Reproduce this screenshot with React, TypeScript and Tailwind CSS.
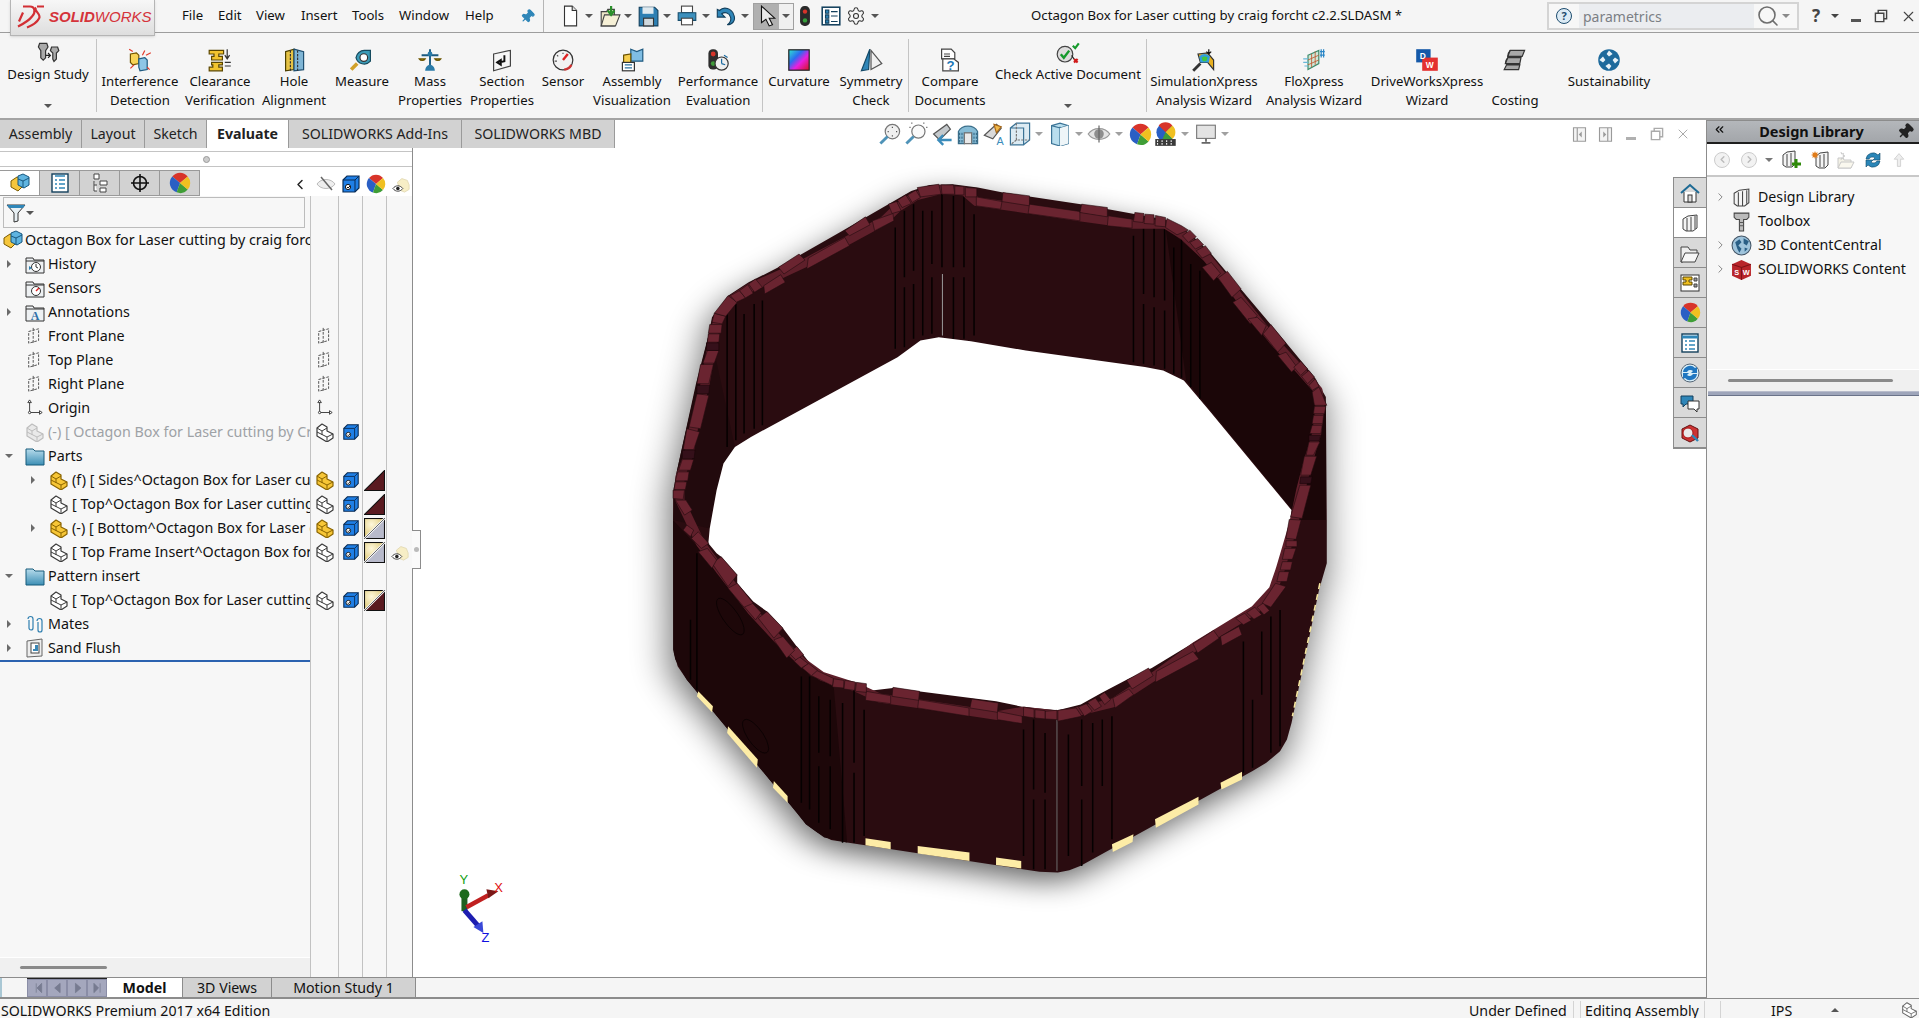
import type { ReactNode } from "react";
import { ChevronLeft, ChevronRight, ChevronsLeft, Pin, Search, Settings, X } from "lucide-react";

const Ic = ({ s = 20, children }: { s?: number; children: ReactNode }) => (
  <svg viewBox="0 0 20 20" width={s} height={s} className="shrink-0">
    {children}
  </svg>
);

const Caret = ({ c = "#555" }: { c?: string }) => (
  <svg viewBox="0 0 8 4" width={8} height={4} className="shrink-0">
    <path d="M0 0h8L4 4z" fill={c} />
  </svg>
);

const TreeCaret = ({ open }: { open?: boolean }) => (
  <svg viewBox="0 0 10 10" width={10} height={10} className="shrink-0">
    {open ? <path d="M1 3h8L5 7z" fill="#6b6b6b" /> : <path d="M3 1l4 4-4 4z" fill="#6b6b6b" />}
  </svg>
);

const Ball = ({ s = 20 }: { s?: number }) => (
  <Ic s={s}>
    <path d="M10 10L3 4A9 9 0 0 1 17 4z" fill="#d8342a" />
    <path d="M10 10L3 4A9 9 0 0 0 7 18.5z" fill="#2a5fc4" />
    <path d="M10 10L7 18.5A9 9 0 0 0 17 16z" fill="#3f9e36" />
    <path d="M10 10L17 16A9 9 0 0 0 17 4z" fill="#f0c020" />
  </Ic>
);

const Part = ({ fill = "#fff", line = "#3a3a3a", s = 20 }: { fill?: string; line?: string; s?: number }) => (
  <Ic s={s}>
    <path d="M2 6l5-4 5 3v4l6 3v4l-6 4-10-6z" fill={fill} stroke={line} strokeWidth="1.2" strokeLinejoin="round" />
    <path d="M2 6l5 3 5-3M7 9v4M2 10l10 5v4M12 15l6-3" fill="none" stroke={line} strokeWidth="1" />
  </Ic>
);

const YPart = () => <Part fill="#f7c636" line="#8a6400" />;
const GPart = () => <Part fill="#e9e9e9" line="#bdbdbd" />;

const PartAsm = () => (
  <Ic>
    <path d="M1 8l6-4 5 2v8l-4 4-7-4z" fill="#f5c63c" stroke="#7a5a00" />
    <path d="M8 3l5-2 6 3v8l-5 3-6-3z" fill="#5fb4e0" stroke="#17577f" />
    <path d="M8 6l5 2 6-3M13 8v7" fill="none" stroke="#17577f" />
  </Ic>
);

const Cube = ({ s = 18 }: { s?: number }) => (
  <Ic s={s}>
    <path d="M2 6l4-4h12v12l-4 4H2z" fill="#1f7fe6" stroke="#0b2d55" strokeWidth="1.2" />
    <path d="M2 6h12v12M14 6l4-4" fill="none" stroke="#0b2d55" strokeWidth="1" />
    <circle cx="7" cy="13" r="2.6" fill="#fff" stroke="#111" />
    <path d="M6 13l1 1 2-2" stroke="#111" fill="none" />
  </Ic>
);

const Tri = ({ kind }: { kind: "m" | "b" | "bm" }) => (
  <svg viewBox="0 0 20 20" width={21} height={21} className="shrink-0">
    <defs>
      <radialGradient id={`tri-${kind}`} cx="0.35" cy="0.3" r="0.8">
        <stop offset="0" stopColor="#fff8dc" />
        <stop offset="1" stopColor="#d8bf62" />
      </radialGradient>
    </defs>
    {kind === "m" ? (
      <path d="M0.5 19.5L19.5 0.5v19z" fill="#5a1a20" stroke="#111" />
    ) : (
      <>
        <rect x="0.5" y="0.5" width="19" height="19" fill={`url(#tri-${kind})`} stroke="#111" />
        <path d="M0.5 19.5L19.5 0.5v19z" fill={kind === "b" ? "#b8bacb" : "#5a1a20"} stroke="#111" />
        <path d="M0.5 19.5L19.5 0.5" stroke="#fff" strokeWidth="2" />
        <path d="M0.5 19.5L19.5 0.5" stroke="#111" strokeWidth="0.6" />
      </>
    )}
  </svg>
);

const Plane = () => (
  <Ic s={18}>
    <path d="M3 5l11-3v13L3 18z" fill="none" stroke="#444" strokeDasharray="3 1.4" />
    <path d="M8 1v18" stroke="#444" strokeDasharray="3 1.5" />
  </Ic>
);

const Origin = () => (
  <Ic s={18}>
    <path d="M4 3v12h11" fill="none" stroke="#333" />
    <path d="M4 1l-2 3h4zM18 15l-3-2v4z" fill="#fff" stroke="#333" />
    <circle cx="4" cy="15" r="1.3" fill="#fff" stroke="#333" />
  </Ic>
);

const FolderBase = ({ children }: { children?: ReactNode }) => (
  <Ic>
    <path d="M1 4h7l1 2h10v13H1z" fill="#eef1f3" stroke="#333" />
    <path d="M1 7h18" stroke="#333" />
    {children}
  </Ic>
);

const BlueFolder = () => (
  <Ic>
    <defs>
      <linearGradient id="blue-fold" x1="0" x2="0" y1="0" y2="1">
        <stop offset="0" stopColor="#b7dcec" />
        <stop offset="1" stopColor="#3d8fb5" />
      </linearGradient>
    </defs>
    <path d="M1 3h7l2 2h9v14H1z" fill="url(#blue-fold)" stroke="#175a7a" />
  </Ic>
);

const Mates = () => (
  <Ic>
    <path d="M3 5a2.5 2.5 0 0 1 5 0v9a2 2 0 0 1-4 0V6M12 7a2.5 2.5 0 0 1 5 0v9a2 2 0 0 1-4 0V8" fill="none" stroke="#2f7fb0" strokeWidth="1.2" />
  </Ic>
);

const Sand = () => (
  <Ic>
    <path d="M2 3l15-2v17L2 19z" fill="#eee" stroke="#666" />
    <rect x="6" y="5" width="8" height="10" fill="#fff" stroke="#444" />
    <path d="M10 7h3v6H8v-2h2z" fill="#3b87b5" />
  </Ic>
);

const Library = ({ s = 20 }: { s?: number }) => (
  <Ic s={s}>
    <path d="M3 6l5-3 9-1v13l-4 3H6l-3-2z" fill="#f4f4f4" stroke="#444" />
    <path d="M7 5v13M11 4v14M15 3v13" stroke="#444" />
  </Ic>
);

// ribbon icons
const ribbonIcons: Record<string, ReactNode> = {
  design: (
    <Ic s={24}>
      <path d="M3 2h6l1 3-2 3v6l-2 2-2-2V8L2 5zM13 5h5l1 3-2 2v5l-2 2-1-2v-5l-2-2z" fill="#aaa" stroke="#333" />
      <path d="M8 12h4M10 10l2 2-2 2" stroke="#222" fill="none" />
    </Ic>
  ),
  interference: (
    <Ic s={24}>
      <path d="M2 5l5-1 2 2v7l-5 1-2-2z" fill="#f7d356" stroke="#705400" />
      <path d="M9 9l5-1 2 2v8l-6 1-1-3z" fill="#8ec6e6" stroke="#1f5a80" />
      <path d="M12 6l2-4M15 6l4-2M2 17l3-3M16 16l2 2M1 1l3 2" stroke="#e23a2a" />
    </Ic>
  ),
  clearance: (
    <Ic s={24}>
      <path d="M1 2h12v3H9v2h3v3H3V7h2V5H1zM3 12h9v2H9v2h3v3H1v-3h3v-2H3z" fill="#f2c42f" stroke="#5b4700" />
      <path d="M16 1v8M14 6l2 3 2-3M14 12h5M14 15h5" stroke="#333" fill="none" />
    </Ic>
  ),
  hole: (
    <Ic s={24}>
      <path d="M3 3l7-2v17l-7 1z" fill="#e6c345" stroke="#4c4000" />
      <path d="M10 1l8 2v15l-8 1z" fill="#7fb5d5" stroke="#1f4f70" />
      <path d="M7 2v17M13 2v17" stroke="#333" strokeDasharray="2 1" />
    </Ic>
  ),
  measure: (
    <Ic s={24}>
      <path d="M5 8a7 7 0 0 1 7-6h5v9a7 7 0 0 1-12-3z" fill="#3c9cb8" stroke="#154a5e" />
      <circle cx="11.5" cy="8" r="3.2" fill="#fff" stroke="#333" />
      <path d="M1 18l5-5" stroke="#d1a12a" strokeWidth="3" />
    </Ic>
  ),
  mass: (
    <Ic s={24}>
      <path d="M10 1v14M3 6h14" stroke="#1b5a80" strokeWidth="1.6" />
      <path d="M6 19c0-3 2-5 4-5s4 2 4 5z" fill="#2a7ba8" />
      <path d="M1 9h5a3 3 0 0 1-5 0zM14 9h5a3 3 0 0 1-5 0z" fill="#f2c94c" stroke="#6b5400" />
      <circle cx="10" cy="5" r="2" fill="#2a7ba8" />
    </Ic>
  ),
  section: (
    <Ic s={24}>
      <path d="M3 5l14-3v13L3 19z" fill="#f6f6f6" stroke="#444" />
      <path d="M12 6v5l-4 1M6 12l3-2v4z" fill="none" stroke="#111" strokeWidth="1.6" />
    </Ic>
  ),
  sensor: (
    <Ic s={24}>
      <circle cx="10" cy="10" r="8.2" fill="#f2f2f2" stroke="#333" />
      <path d="M10 10l4-5" stroke="#d22" strokeWidth="2" />
      <path d="M5 6l1 1M10 4v1M3 11h2" stroke="#555" />
      <path d="M11 18a8 8 0 0 0 6-4" stroke="#c33" fill="none" strokeWidth="2" />
    </Ic>
  ),
  assembly: (
    <Ic s={24}>
      <path d="M9 1l5 2 5-2v10H9z" fill="#7fbde3" stroke="#1f5a80" />
      <path d="M3 6l6-1v9H3z" fill="#f7cf4f" stroke="#6a5200" />
      <rect x="2" y="12" width="10" height="7" fill="#fff" stroke="#333" />
      <path d="M4 14h6M4 16.5h6" stroke="#2b72a0" />
    </Ic>
  ),
  perf: (
    <Ic s={24}>
      <rect x="2" y="1" width="8" height="17" rx="3.5" fill="#2d2d2d" />
      <circle cx="6" cy="5" r="2" fill="#d5342a" />
      <circle cx="6" cy="13" r="2" fill="#3f9a3a" />
      <circle cx="13" cy="13" r="5.5" fill="#eee" stroke="#333" />
      <path d="M13 13V9M13 13l3 1M15 6l3 2" stroke="#1a6aa0" />
    </Ic>
  ),
  curvature: (
    <Ic s={24}>
      <defs>
        <linearGradient id="curv-a" x1="0" y1="0" x2="1" y2="1">
          <stop offset="0" stopColor="#2fe6d0" />
          <stop offset="0.35" stopColor="#2b6cf0" />
          <stop offset="0.6" stopColor="#e81fe0" />
          <stop offset="1" stopColor="#d8141c" />
        </linearGradient>
      </defs>
      <rect x="1.5" y="1.5" width="17" height="17" fill="url(#curv-a)" stroke="#222" />
    </Ic>
  ),
  symmetry: (
    <Ic s={24}>
      <path d="M9 1L2 19l6-1z" fill="#2f86b8" stroke="#144a68" />
      <path d="M10 2v16l9-5z" fill="#f0f0f0" stroke="#555" />
    </Ic>
  ),
  compare: (
    <Ic s={24}>
      <path d="M3 1h8l3 3v5H3z" fill="#fff" stroke="#444" />
      <path d="M4 9h9l4 3v7H4z" fill="#fff" stroke="#444" />
      <path d="M5 5h5M5 7h5" stroke="#444" />
      <text x="10.5" y="18" fontSize="11" fontWeight="700" fill="#1d77b6" textAnchor="middle" fontFamily="Liberation Sans">?</text>
    </Ic>
  ),
  check: (
    <Ic s={24}>
      <circle cx="7.5" cy="11" r="6.5" fill="#ddd" stroke="#444" />
      <path d="M4 11l2.5 3L11 8" stroke="#159a2c" strokeWidth="2" fill="none" />
      <path d="M14 4l2 2 3-4" stroke="#159a2c" strokeWidth="1.8" fill="none" />
      <path d="M15 15l3 3M18 15l-3 3" stroke="#d01818" strokeWidth="1.8" />
      <path d="M13 12l2 3" stroke="#222" />
    </Ic>
  ),
  simulation: (
    <Ic s={24}>
      <path d="M5 5l8-1 5 6v8l-5-6H7z" fill="#e8b020" stroke="#333" />
      <path d="M6 7a6 6 0 0 1 9 0l-1 5H7z" fill="#2f9de0" />
      <path d="M8 8a4 4 0 0 1 5 0l-1 3H9z" fill="#43c440" />
      <path d="M14 1v4M12 3l2 2 2-2" stroke="#111" fill="none" />
      <path d="M1 19l6-6" stroke="#333" strokeWidth="2.4" />
    </Ic>
  ),
  flo: (
    <Ic s={24}>
      <path d="M5 6l9-4v11l-9 5z" fill="#cfe7d8" stroke="#3e8c6c" />
      <path d="M8 5v11M11 3v11M5 10l9-4M5 14l9-4" stroke="#c0572f" strokeWidth=".7" />
      <path d="M1 9h4M1 12h4M2 15h3" stroke="#68b8d8" />
      <path d="M15 3h4M15 6h4M16 1v7M18 1v7" stroke="#2b86c6" />
    </Ic>
  ),
  drive: (
    <svg viewBox="0 0 20 20" width={24} height={24} className="shrink-0">
      <rect x="1" y="1" width="12" height="11" fill="#1559a8" />
      <rect x="6" y="8" width="13" height="11" fill="#e4302f" />
      <text x="4" y="9" fontSize="7" fill="#fff" fontFamily="Liberation Sans" fontWeight="700">D</text>
      <text x="9" y="17" fontSize="7" fill="#fff" fontFamily="Liberation Sans" fontWeight="700">W</text>
    </svg>
  ),
  costing: (
    <Ic s={24}>
      <path d="M6 2h12l-2 5H4zM4 8h11l-1 5H2zM3 14h11l-1 4H1z" fill="#a8a8a8" stroke="#333" />
      <path d="M6 2c-2 2-2 4-2 5M4 8c-2 2-2 4-2 5" stroke="#333" fill="none" />
    </Ic>
  ),
  sustain: (
    <Ic s={24}>
      <circle cx="10" cy="10" r="9" fill="#1e6a9c" />
      <path d="M10 2l3 3-3 2-2-2zM18 10l-3 3-2-3 2-2zM10 18l-3-3 3-2 2 2zM2 10l3-3 2 3-2 2z" fill="#e8f2f8" />
    </Ic>
  ),
};

type Rb = { w: number; lines: string[]; icon?: string };

const Btn = ({ b }: { b: Rb }) => (
  <div style={{ width: b.w }} className="flex shrink-0 flex-col items-center pt-[15px]">
    <div className="flex h-[24px] items-center justify-center">{b.icon ? ribbonIcons[b.icon] : null}</div>
    {b.lines.map((l, i) => (
      <div key={i} className="h-[19px] whitespace-nowrap leading-[19px]">
        {l || "\u00a0"}
      </div>
    ))}
  </div>
);

const Tall = ({ w, label, icon }: { w: number; label: string; icon: string }) => (
  <div style={{ width: w }} className="flex shrink-0 flex-col items-center pt-[7px]">
    <div className="flex h-[25px] items-center justify-center">{ribbonIcons[icon]}</div>
    <div className="h-[19px] whitespace-nowrap leading-[19px]">{label}</div>
    <div className="mt-[20px]">
      <Caret />
    </div>
  </div>
);

const Sep = () => <div className="my-[6px] w-px shrink-0 bg-[#c4c4c4]" />;

const group1: Rb[] = [
  { w: 80, lines: ["Interference", "Detection"], icon: "interference" },
  { w: 80, lines: ["Clearance", "Verification"], icon: "clearance" },
  { w: 68, lines: ["Hole", "Alignment"], icon: "hole" },
  { w: 68, lines: ["Measure"], icon: "measure" },
  { w: 68, lines: ["Mass", "Properties"], icon: "mass" },
  { w: 76, lines: ["Section", "Properties"], icon: "section" },
  { w: 46, lines: ["Sensor"], icon: "sensor" },
  { w: 92, lines: ["Assembly", "Visualization"], icon: "assembly" },
  { w: 80, lines: ["Performance", "Evaluation"], icon: "perf" },
];

const Ribbon = () => (
  <div className="flex h-[87px] shrink-0 border-b-2 border-[#a3a3a3] bg-[#f5f5f5] text-[13.2px] text-[#111]">
    <Tall w={96} label="Design Study" icon="design" />
    <Sep />
    <div className="w-[3px] shrink-0" />
    {group1.map((b) => (
      <Btn key={b.lines[0]} b={b} />
    ))}
    <div className="w-[4px] shrink-0" />
    <Sep />
    <div className="w-px shrink-0" />
    <Btn b={{ w: 70, lines: ["Curvature"], icon: "curvature" }} />
    <Btn b={{ w: 74, lines: ["Symmetry", "Check"], icon: "symmetry" }} />
    <Sep />
    <div className="w-px shrink-0" />
    <Btn b={{ w: 80, lines: ["Compare", "Documents"], icon: "compare" }} />
    <Tall w={156} label="Check Active Document" icon="check" />
    <Sep />
    <Btn b={{ w: 114, lines: ["SimulationXpress", "Analysis Wizard"], icon: "simulation" }} />
    <Btn b={{ w: 106, lines: ["FloXpress", "Analysis Wizard"], icon: "flo" }} />
    <Btn b={{ w: 120, lines: ["DriveWorksXpress", "Wizard"], icon: "drive" }} />
    <Btn b={{ w: 56, lines: ["", "Costing"], icon: "costing" }} />
    <Btn b={{ w: 132, lines: ["Sustainability"], icon: "sustain" }} />
  </div>
);

const Box = ({ w, children }: { w: number; children?: ReactNode }) => (
  <div style={{ width: w }} className="flex shrink-0 items-center justify-center">
    {children}
  </div>
);

const menus: [string, number][] = [
  ["File", 36],
  ["Edit", 38],
  ["View", 45],
  ["Insert", 51],
  ["Tools", 47],
  ["Window", 66],
  ["Help", 54],
];

const TitleBar = () => (
  <div className="relative z-10 flex h-[33px] shrink-0 items-center border-b border-[#9d9d9d] bg-[#f5f5f5] text-[13.2px] text-[#111]">
    <div className="mb-[-3px] ml-[10px] flex h-[36px] w-[145px] shrink-0 items-center self-start border border-t-0 border-[#b5b5b5] bg-gradient-to-b from-[#f7f7f7] to-[#dedede] shadow-sm">
      <svg viewBox="0 0 30 26" width={30} height={27} className="ml-[5px] shrink-0">
        <path d="M7 2h7c5 0 6 6 2 10-3 4-8 7-14 10M7 8l-4 9M21 2h7M20 3c-3 3 6 7 3 11-2 4-7 7-12 9" fill="none" stroke="#d22f34" strokeWidth="2.2" />
      </svg>
      <span className="ml-[3px] font-['Liberation_Sans',sans-serif] text-[15px] italic text-[#d5333a]">
        <b>SOLID</b>WORKS
      </span>
    </div>
    <div className="ml-[27px] flex shrink-0">
      {menus.map(([m, w]) => (
        <div key={m} style={{ width: w }}>
          {m}
        </div>
      ))}
    </div>
    <Box w={16}>
      <Pin size={15} fill="#2f86b8" stroke="#2f86b8" className="rotate-45" />
    </Box>
    <div className="ml-[8px] h-full w-px shrink-0 bg-[#b5b5b5]" />
    <div className="w-[16px] shrink-0" />
    <Box w={20}>
      <Ic s={22}>
        <path d="M5 1h7l4 4v14H5z" fill="#fff" stroke="#333" />
        <path d="M12 1v4h4" fill="#ddd" stroke="#333" />
      </Ic>
    </Box>
    <Box w={18}><Caret /></Box>
    <Box w={24}>
      <Ic s={22}>
        <path d="M2 6h5l1-2h6v15H2z" fill="#eee7c8" stroke="#444" />
        <path d="M2 19l3-10h14l-4 10z" fill="#f6f0d6" stroke="#444" />
        <path d="M11 1v6M8 5l3 4 3-4" fill="none" stroke="#2a8f2a" strokeWidth="2" />
      </Ic>
    </Box>
    <Box w={12}><Caret /></Box>
    <Box w={28}>
      <Ic s={22}>
        <path d="M2 2h14l3 3v14H2z" fill="#2d7fb3" stroke="#123f5c" />
        <rect x="5" y="2" width="10" height="6" fill="#dfe9ef" />
        <rect x="6" y="12" width="9" height="7" fill="#cfd8dd" stroke="#333" />
      </Ic>
    </Box>
    <Box w={10}><Caret /></Box>
    <Box w={30}>
      <Ic s={22}>
        <rect x="5" y="1" width="10" height="6" fill="#fff" stroke="#444" />
        <path d="M2 7h16v7H2z" fill="#3c90bd" stroke="#174e6d" />
        <rect x="5" y="12" width="10" height="6" fill="#fff" stroke="#444" />
      </Ic>
    </Box>
    <Box w={8}><Caret /></Box>
    <Box w={30}>
      <Ic s={22}>
        <path d="M3 4v7h7L7 8c3-2 7-1 8 3 1 3-1 6-3 7 5 0 8-4 6-9-2-6-9-8-13-4z" fill="#2f86b8" stroke="#123f5c" />
      </Ic>
    </Box>
    <Box w={10}><Caret /></Box>
    <div className="w-[3px] shrink-0" />
    <div className="flex h-[27px] w-[41px] shrink-0 border border-[#a0a0a0]">
      <div className="flex w-[25px] items-center justify-center bg-[#b0b0b0]">
        <Ic s={22}>
          <path d="M5 1v15l4-3 3 6 3-1-3-6h5z" fill="#e9e9e9" stroke="#111" />
        </Ic>
      </div>
      <div className="flex flex-1 items-center justify-center bg-[#f0f0f0]">
        <Caret />
      </div>
    </div>
    <Box w={22}>
      <Ic s={22}>
        <rect x="5.5" y="1" width="9" height="18" rx="4" fill="#2a2a2a" />
        <circle cx="10" cy="6" r="2" fill="#d8342a" />
        <circle cx="10" cy="14" r="2" fill="#35a03a" />
      </Ic>
    </Box>
    <Box w={30}>
      <Ic s={22}>
        <rect x="2" y="2" width="16" height="16" fill="#fff" stroke="#123f5c" strokeWidth="1.4" />
        <path d="M5 4.5h3v3H5zM5 9h3v3H5zM5 13.5h3v3H5zM10 6h6M10 10h6M10 15h6" fill="#2f86b8" stroke="#123f5c" />
      </Ic>
    </Box>
    <Box w={20}>
      <Settings size={20} strokeWidth={1.3} color="#333" />
    </Box>
    <Box w={18}><Caret /></Box>
    <div className="ml-[147px] whitespace-nowrap">Octagon Box for Laser cutting by craig forcht c2.2.SLDASM *</div>
    <div className="ml-auto flex h-full shrink-0 items-center">
      <div className="flex h-[28px] w-[252px] items-center border-2 border-[#d4d4d4] bg-[#f7f7f7]">
        <Box w={30}>
          <div className="flex h-[16px] w-[16px] items-center justify-center rounded-full border border-[#1d4c6e] bg-[#dcebf5] text-[11px] font-bold text-[#1d4c6e]">?</div>
        </Box>
        <div className="flex h-[24px] w-[175px] items-center bg-[#ebedf0] pl-[4px] text-[14px] text-[#7b7f85]">parametrics</div>
        <Box w={28}>
          <Search size={24} strokeWidth={1.6} color="#6e6e6e" />
        </Box>
        <Caret c="#8a8a8a" />
      </div>
      <Box w={34}><span className="text-[17px] font-bold text-[#444]">?</span></Box>
      <Box w={4}><Caret c="#444" /></Box>
      <Box w={38}><div className="mt-[8px] h-[3px] w-[10px] bg-[#555]" /></Box>
      <Box w={12}>
        <Ic s={14}>
          <path d="M2 6h12v12H2zM6 6V2h12v12h-4" fill="none" stroke="#444" strokeWidth="2" />
        </Ic>
      </Box>
      <div className="ml-[11px] flex w-[20px] items-center justify-center">
        <X size={17} strokeWidth={1.6} color="#444" />
      </div>
      <div className="w-px" />
    </div>
  </div>
);

const viewIcons: [ReactNode, number][] = [
  [
    <Ic s={24} key="a">
      <circle cx="12" cy="8" r="6" fill="#f0f0f0" stroke="#777" />
      <path d="M12 4v1M12 11v1M8 8h1M15 8h1" stroke="#555" />
      <path d="M2 18l6-6" stroke="#4f93b8" strokeWidth="2.4" />
    </Ic>,
    26,
  ],
  [
    <Ic s={24} key="b">
      <circle cx="12" cy="8" r="5.5" fill="#fafafa" stroke="#777" />
      <path d="M6 1h2M16 1h2M19 4v2M5 4v2" stroke="#666" strokeDasharray="1 1" />
      <path d="M2 18l6-6" stroke="#4f93b8" strokeWidth="2.4" />
    </Ic>,
    26,
  ],
  [
    <Ic s={24} key="c">
      <path d="M3 10l11-8 3 4-9 9z" fill="#c4c9cc" stroke="#555" />
      <path d="M7 15h11M11 11l-4 4 4 4" fill="none" stroke="#3b8cbb" strokeWidth="2" />
    </Ic>,
    26,
  ],
  [
    <Ic s={24} key="d">
      <path d="M2 8c3-6 13-6 16 0v10h-5V9H7v9H2z" fill="#86bcd6" stroke="#3a6e8a" />
      <path d="M7 9h6v9H7z" fill="#e9e9e9" stroke="#777" />
      <path d="M3 9v8M5 9v8M15 9v8M17 9v8" stroke="#3a6e8a" strokeDasharray="2 1" />
    </Ic>,
    26,
  ],
  [
    <Ic s={24} key="e">
      <path d="M2 11l10-9 4 3-7 9z" fill="#d9d9d9" stroke="#555" />
      <path d="M10 2l6 2-4 5z" fill="#f1b94a" stroke="#a8681a" />
      <text x="15" y="19" fontSize="9" fill="#3b8cbb" textAnchor="middle" fontFamily="Liberation Sans">A</text>
    </Ic>,
    25,
  ],
  [
    <Ic s={24} key="f">
      <path d="M2 5h11v14H2zM2 5l5-4h11v14l-5 4" fill="#dcebf3" stroke="#3a7396" />
      <path d="M7 1v14h11M7 15l-5 4" fill="none" stroke="#777" strokeDasharray="2 1" />
    </Ic>,
    28,
  ],
  [<Caret key="g" c="#a0a0a0" />, 10],
  [
    <Ic s={24} key="h">
      <path d="M3 3l7-2 7 2v15l-7 2-7-2z" fill="#b9deee" stroke="#3a7396" />
      <path d="M10 4v16M3 3l7 2 7-2" fill="none" stroke="#3a7396" />
      <path d="M10 5l7-2v15l-7 2z" fill="#eef5f8" />
    </Ic>,
    32,
  ],
  [<Caret key="i" c="#a0a0a0" />, 6],
  [
    <Ic s={24} key="j">
      <path d="M1 10c4-6 14-6 18 0-4 6-14 6-18 0z" fill="#e4e4e4" stroke="#999" />
      <circle cx="10" cy="10" r="4" fill="#8e8e8e" />
      <path d="M10 3v14" stroke="#666" />
    </Ic>,
    34,
  ],
  [<Caret key="k" c="#a0a0a0" />, 6],
  [<Ball key="l" s={23} />, 36],
  [
    <svg viewBox="0 0 20 22" width={23} height={25} key="m" className="shrink-0">
      <circle cx="10" cy="9" r="8" fill="#2a5fc4" />
      <path d="M10 9L4 3a8 8 0 0 1 12 0z" fill="#d8342a" />
      <path d="M10 9l6-6a8 8 0 0 1 0 12z" fill="#f0c020" />
      <path d="M10 9l6 6a8 8 0 0 1-9 1z" fill="#3f9e36" />
      <rect x="1" y="15" width="18" height="6" fill="#3a3a3a" />
      <path d="M3 16v4M7 16v4M11 16v4M15 16v4" stroke="#eee" strokeDasharray="1.5 1" />
    </svg>,
    14,
  ],
  [<Caret key="n" c="#a0a0a0" />, 26],
  [
    <Ic s={22} key="o">
      <rect x="1.5" y="2" width="17" height="12" fill="#e3e3e3" stroke="#777" />
      <path d="M10 14v3M6 18h8" stroke="#666" strokeWidth="1.6" />
    </Ic>,
    16,
  ],
  [<Caret key="p" c="#a0a0a0" />, 22],
];

const tabs: [string, number, boolean][] = [
  ["Assembly", 82, false],
  ["Layout", 63, false],
  ["Sketch", 62, false],
  ["Evaluate", 82, true],
  ["SOLIDWORKS Add-Ins", 173, false],
  ["SOLIDWORKS MBD", 153, false],
];

const TabRow = () => (
  <div className="flex h-[28px] shrink-0 items-stretch bg-white text-[14.2px] text-[#222]">
    {tabs.map(([t, w, on]) => (
      <div
        key={t}
        style={{ width: w }}
        className={
          on
            ? "flex shrink-0 items-center justify-center border-r border-[#9a9a9a] bg-white font-bold"
            : "flex shrink-0 items-center justify-center border-r border-[#9a9a9a] bg-[#d2d2d2]"
        }
      >
        {t}
      </div>
    ))}
    <div className="w-[262px] shrink-0" />
    {viewIcons.map(([ic, w], i) => (
      <Box key={i} w={w}>
        {ic}
      </Box>
    ))}
    <div className="ml-auto flex shrink-0 items-center pr-[10px]">
      <Box w={26}>
        <Ic s={15}>
          <path d="M2 1h16v18H2zM7 1v18" fill="#f4f4f4" stroke="#9a9a9a" strokeWidth="1.5" />
          <path d="M13 6l-4 4 4 4z" fill="#9a9a9a" />
        </Ic>
      </Box>
      <Box w={26}>
        <Ic s={15}>
          <path d="M2 1h16v18H2zM13 1v18" fill="#f4f4f4" stroke="#9a9a9a" strokeWidth="1.5" />
          <path d="M7 6l4 4-4 4z" fill="#9a9a9a" />
        </Ic>
      </Box>
      <Box w={26}>
        <div className="mt-[9px] h-[3px] w-[10px] bg-[#b0b0b0]" />
      </Box>
      <Box w={26}>
        <Ic s={14}>
          <path d="M2 6h12v12H2zM6 6V2h12v12h-4" fill="none" stroke="#aaa" strokeWidth="2" />
        </Ic>
      </Box>
      <Box w={26}>
        <X size={16} strokeWidth={1.5} color="#aaa" />
      </Box>
    </div>
  </div>
);

type Row = {
  caret?: "r" | "d";
  lvl: 0 | 1;
  icon: ReactNode;
  label: string;
  grey?: boolean;
  c1?: ReactNode;
  c2?: ReactNode;
  c3?: ReactNode;
  c4?: ReactNode;
};

const eye = (
  <Ic s={18}>
    <path d="M6 8l5-4 6 2 2 5v5l-5 3-5-2z" fill="#f7eec6" stroke="#e2d9b4" />
    <path d="M1 15c3-4 8-4 11 0-3 4-8 4-11 0z" fill="#fff" stroke="#333" />
    <circle cx="6.5" cy="15" r="2" fill="#222" />
  </Ic>
);

const rows: Row[] = [
  { caret: "r", lvl: 0, icon: <FolderBase><circle cx="11" cy="13" r="4.5" fill="#fff" stroke="#333" /><path d="M11 10v3l2 1" stroke="#333" fill="none" /><path d="M4 12l3 2-3 2z" fill="#2f7fb0" /></FolderBase>, label: "History" },
  { lvl: 0, icon: <FolderBase><circle cx="11" cy="13" r="4.5" fill="#fff" stroke="#333" /><path d="M11 13l3-3" stroke="#d22" strokeWidth="1.5" /></FolderBase>, label: "Sensors" },
  { caret: "r", lvl: 0, icon: <FolderBase><text x="10" y="18" fontSize="12" fontWeight="700" fill="#2f6fa8" textAnchor="middle" fontFamily="Liberation Serif">A</text></FolderBase>, label: "Annotations" },
  { lvl: 0, icon: <Plane />, label: "Front Plane", c1: <Plane /> },
  { lvl: 0, icon: <Plane />, label: "Top Plane", c1: <Plane /> },
  { lvl: 0, icon: <Plane />, label: "Right Plane", c1: <Plane /> },
  { lvl: 0, icon: <Origin />, label: "Origin", c1: <Origin /> },
  { lvl: 0, icon: <GPart />, label: "(-) [ Octagon Box for Laser cutting by Craig Forcht", grey: true, c1: <Part />, c2: <Cube /> },
  { caret: "d", lvl: 0, icon: <BlueFolder />, label: "Parts" },
  { caret: "r", lvl: 1, icon: <YPart />, label: "(f) [ Sides^Octagon Box for Laser cutting", c1: <YPart />, c2: <Cube />, c3: <Tri kind="m" /> },
  { lvl: 1, icon: <Part />, label: "[ Top^Octagon Box for Laser cutting by", c1: <Part />, c2: <Cube />, c3: <Tri kind="m" /> },
  { caret: "r", lvl: 1, icon: <YPart />, label: "(-) [ Bottom^Octagon Box for Laser cutting", c1: <YPart />, c2: <Cube />, c3: <Tri kind="b" /> },
  { lvl: 1, icon: <Part />, label: "[ Top Frame Insert^Octagon Box for Laser", c1: <Part />, c2: <Cube />, c3: <Tri kind="b" />, c4: eye },
  { caret: "d", lvl: 0, icon: <BlueFolder />, label: "Pattern insert" },
  { lvl: 1, icon: <Part />, label: "[ Top^Octagon Box for Laser cutting by", c1: <Part />, c2: <Cube />, c3: <Tri kind="bm" /> },
  { caret: "r", lvl: 0, icon: <Mates />, label: "Mates" },
  { caret: "r", lvl: 0, icon: <Sand />, label: "Sand Flush" },
];

const Cols = ({ a, b, c, d, h = "h-[24px]" }: { a?: ReactNode; b?: ReactNode; c?: ReactNode; d?: ReactNode; h?: string }) => (
  <>
    <div className={`flex w-[28px] shrink-0 items-center justify-center border-l border-[#c2c2c2] ${h}`}>{a}</div>
    <div className={`flex w-[24px] shrink-0 items-center justify-center border-l border-[#c2c2c2] ${h}`}>{b}</div>
    <div className={`flex w-[24px] shrink-0 items-center justify-center border-l border-[#c2c2c2] ${h}`}>{c}</div>
    <div className={`flex w-[26px] shrink-0 items-center justify-center border-l border-[#c2c2c2] ${h}`}>{d}</div>
  </>
);

const TreeRow = ({ r }: { r: Row }) => (
  <div className="flex h-[24px] text-[14.3px] leading-[24px]">
    <div className={r.grey ? "flex w-[310px] shrink-0 items-center overflow-hidden whitespace-nowrap text-[#9ea2a6]" : "flex w-[310px] shrink-0 items-center overflow-hidden whitespace-nowrap text-[#111]"}>
      {r.lvl === 1 ? <div className="w-[24px] shrink-0" /> : null}
      <div className="ml-[4px] flex w-[21px] shrink-0 items-center">{r.caret ? <TreeCaret open={r.caret === "d"} /> : null}</div>
      <div className="flex w-[20px] shrink-0 items-center justify-center">{r.icon}</div>
      <span className="ml-[3px]">{r.label}</span>
    </div>
    <Cols a={r.c1} b={r.c2} c={r.c3} d={r.c4} />
  </div>
);

const fmTabs: ReactNode[] = [
  <PartAsm key="a" />,
  <Ic key="b">
    <rect x="2" y="1" width="16" height="18" fill="#fff" stroke="#123f5c" strokeWidth="1.4" />
    <path d="M5 3h10M5 7h2M9 7h6M5 11h2M9 11h6M5 15h2M9 15h6" stroke="#2f86b8" strokeWidth="1.6" />
  </Ic>,
  <Ic key="c">
    <path d="M4 1h5v5H4zM4 8v10h3M4 12h3M10 8h7v4h-7zM10 15h6v4h-6z" fill="#fff" stroke="#444" />
  </Ic>,
  <Ic key="d">
    <circle cx="10" cy="10" r="6.5" fill="none" stroke="#111" strokeWidth="1.6" />
    <path d="M10 1v18M1 10h18" stroke="#111" strokeWidth="1.6" />
  </Ic>,
  <Ball key="e" s={22} />,
];

const LeftPanel = () => (
  <div className="relative flex w-[413px] shrink-0 flex-col border-r border-[#8c8c8c] bg-[#f7f7f7]">
    <div className="h-[3px] shrink-0 bg-white" />
    <div className="flex h-[16px] shrink-0 items-center justify-center border-y border-[#c4c4c4] bg-white">
      <div className="h-[7px] w-[7px] rounded-full border border-[#999] bg-[#ccc]" />
    </div>
    <div className="flex h-[29px] shrink-0 items-end bg-white">
      <div className="flex h-[26px] border-b border-[#9a9a9a]">
        {fmTabs.map((t, i) => (
          <div key={i} className={i === 0 ? "flex w-[40px] items-center justify-center border-r border-t border-[#9a9a9a] bg-white" : "flex w-[40px] items-center justify-center border-r border-t border-[#9a9a9a] bg-[#d2d2d2]"}>
            {t}
          </div>
        ))}
      </div>
      <div className="flex flex-1 items-center self-end pb-[2px]">
        <div className="ml-[92px] flex w-[16px] justify-center">
          <ChevronLeft size={17} strokeWidth={2.2} color="#222" />
        </div>
        <div className="w-[5px] shrink-0" />
        <Box w={25}>
          <Ic>
            <path d="M1 10c4-6 14-6 18 0-4 6-14 6-18 0z" fill="#eee" stroke="#bbb" />
            <path d="M5 3l11 13" stroke="#666" strokeWidth="1.5" />
          </Ic>
        </Box>
        <Box w={25}>
          <Cube s={20} />
        </Box>
        <Box w={25}>
          <Ball s={20} />
        </Box>
        <Box w={25}>{eye}</Box>
      </div>
    </div>
    <div className="flex h-[32px] shrink-0">
      <div className="w-[310px] shrink-0 pl-[3px] pt-[1px]">
        <div className="flex h-[31px] w-[302px] items-center border border-[#bcbcbc] bg-[#f7f7f7] pl-[2px]">
          <Ic s={20}>
            <path d="M1 2h18l-7 8v8l-4 1v-9z" fill="#e8f0f4" stroke="#333" />
            <path d="M1 2h18l-2 3H3z" fill="#2f86b8" />
          </Ic>
          <Caret />
        </div>
      </div>
      <Cols h="h-[32px]" />
    </div>
    <div className="flex h-[24px] text-[14.3px] leading-[24px]">
      <div className="flex w-[310px] shrink-0 items-center overflow-hidden whitespace-nowrap pl-[3px] text-[#111]">
        <PartAsm />
        <span className="ml-[2px]">Octagon Box for Laser cutting by craig forcht c2.2</span>
      </div>
      <Cols />
    </div>
    {rows.map((r, i) => (
      <TreeRow key={i} r={r} />
    ))}
    <div className="flex min-h-0 flex-1">
      <div className="flex w-[310px] shrink-0 flex-col">
        <div className="h-[2px] shrink-0 bg-[#2b62b0]" />
        <div className="flex-1" />
        <div className="flex h-[20px] shrink-0 items-center border-t border-white bg-[#f0f0f0] pl-[20px]">
          <div className="h-[3px] w-[87px] rounded bg-[#8a8a8a]" />
        </div>
      </div>
      <Cols h="h-full" />
    </div>
    <div className="absolute right-[-9px] top-[382px] flex h-[39px] w-[9px] items-center justify-center border-y border-r border-[#8c8c8c] bg-[#fafafa]">
      <div className="h-[5px] w-[5px] rounded-full bg-[#bbb]" />
    </div>
  </div>
);

// model drawing, points traced in crop coordinates
const backRim = [
  "603,50 650,40 655,70 610,78", "655,42 682,42 685,70 657,70", "685,45 705,47 705,72 685,72", "708,50 733,52 733,78 708,78",
  "732,78 788,92 785,115 732,105", "790,65 848,75 848,105 788,92", "848,100 958,122 958,150 845,128", "962,100 1018,110 1018,138 958,125",
  "1020,135 1072,145 1072,172 1018,165", "1078,125 1098,128 1096,155 1075,152", "1100,130 1120,132 1120,160 1098,158", "1123,134 1145,140 1145,168 1122,165",
  "1148,143 1180,165 1195,178 1170,192 1145,170", "1198,178 1212,198 1195,215 1182,195", "1215,203 1228,222 1210,235 1198,215", "1232,225 1245,248 1225,262 1212,240",
  "1245,275 1265,308 1250,330 1225,290", "1280,302 1310,355 1290,380 1260,322", "1310,380 1345,435 1330,460 1292,395", "1345,440 1365,465 1355,495 1325,445",
  "1375,462 1408,518 1390,545 1358,490", "1408,545 1432,590 1420,605 1390,555", "1440,572 1455,595 1440,615 1425,590", "1458,600 1470,620 1455,640 1442,618",
  "1472,625 1480,648 1465,660 1458,645", "1480,650 1497,705 1470,705 1465,665", "1470,708 1495,708 1492,730 1468,730", "1468,735 1490,735 1488,760 1465,760",
  "1465,765 1487,765 1484,790 1460,790", "1458,815 1482,815 1468,855 1452,855", "1448,858 1475,858 1462,915 1440,915", "1438,945 1462,945 1443,1045 1418,1040",
  "1415,1048 1441,1050 1430,1108 1408,1105",
  "75,990 98,990 112,1020 95,1035", "70,960 95,960 92,988 70,985", "75,935 100,935 97,958 72,958", "80,905 105,905 102,932 75,932", "90,868 115,868 108,900 82,900",
  "100,775 128,785 115,838 92,838", "122,670 148,675 130,775 105,770", "130,582 158,582 148,640 122,640", "145,540 170,540 160,578 135,578",
  "147,490 172,490 170,515 145,515", "150,462 177,462 175,488 147,488", "160,428 185,437 177,460 155,455", "190,375 210,395 185,437 160,428",
  "195,375 215,360 228,382 208,395", "215,360 233,342 245,368 228,382", "235,340 250,325 265,350 248,365", "268,345 305,312 315,335 270,370",
  "300,290 345,250 358,268 312,310", "365,262 445,200 455,225 362,295", "445,180 490,138 500,162 455,195", "505,150 550,128 552,150 510,180",
  "540,100 558,92 568,120 548,128", "560,88 578,72 590,98 570,110", "582,72 600,58 610,80 592,95",
];
const darkRim = ["1458,795 1484,795 1480,812 1458,812", "1440,920 1465,920 1462,940 1438,940", "90,840 118,840 116,865 90,865", "122,645 150,645 148,670 122,670", "143,517 170,517 170,540 143,540"];
const frontRim = [
  "1408,62 1432,62 1432,80 1408,80", "1405,85 1430,85 1422,118 1400,118", "1400,125 1422,125 1418,150 1395,150", "1393,155 1415,155 1410,185 1388,185", "1385,190 1408,200 1375,262 1356,250",
  "1345,262 1358,250 1372,272 1360,285", "1322,278 1340,262 1355,285 1338,298", "1298,295 1318,280 1332,302 1315,315", "1265,350 1305,320 1312,345 1268,378",
  "1205,372 1250,332 1262,355 1215,400", "1125,455 1205,395 1218,418 1123,488", "1060,482 1108,445 1118,468 1072,508", "1030,535 1065,508 1075,525 1035,565",
  "1000,530 1012,518 1025,540 1012,555", "975,548 992,535 1005,560 990,572", "955,562 972,552 985,575 968,590", "910,572 950,565 962,590 910,605",
  "882,575 908,572 908,600 882,598", "860,570 882,573 882,598 860,595", "835,562 858,568 858,595 835,590", "778,575 832,590 832,612 778,600",
  "722,538 780,550 778,578 718,565", "606,540 716,565 716,590 604,565", "550,503 608,515 606,542 548,530", "492,515 545,528 545,552 490,542",
  "470,488 492,492 492,518 468,515", "445,482 468,487 466,512 443,508", "420,477 443,482 442,505 418,502", "380,450 420,476 418,498 368,465",
  "365,430 385,452 372,468 352,445", "345,410 365,432 350,445 335,425", "340,380 355,405 338,420 322,398", "310,350 335,392 318,415 290,360",
  "275,275 310,325 290,355 256,295", "240,245 262,278 250,300 222,255", "210,190 245,250 225,262 190,205", "175,110 210,165 190,200 155,130",
  "145,85 165,120 155,145 125,95", "125,35 148,70 132,85 110,55", "100,15 115,30 108,50 92,30",
];
const cream = [
  "125,515 157,560 155,578 122,530", "190,620 255,720 253,745 188,640", "290,785 320,830 320,850 288,805", "490,957 545,968 545,990 490,978",
  "604,980 717,1000 717,1025 604,1003", "775,1015 830,1025 830,1048 775,1037", "1028,975 1075,945 1073,968 1030,998", "1122,900 1217,832 1217,855 1124,925",
  "1265,790 1312,757 1312,780 1267,810",
];
const silhouette =
  "70,1050 70,965 78,905 95,800 125,620 145,510 155,440 190,375 235,335 300,290 440,180 540,100 590,60 630,42 680,40 735,50 790,65 960,100 1140,145 1170,160 1200,190 1245,250 1410,520 1470,620 1495,680 1497,1050 1497,1180 1480,1260 1420,1660 1410,1710 1395,1745 1365,1780 1335,1805 960,2090 935,2103 910,2110 870,2108 450,2020 415,2012 385,1990 360,1965 340,1930 100,1530 80,1490 72,1450";
const opening =
  "150,1075 165,960 180,880 205,830 240,800 560,560 610,510 650,500 720,512 840,540 1100,590 1140,600 1185,630 1240,720 1420,1020 1418,1050 1405,1150 1395,1220 1385,1260 1360,1295 1300,1340 1250,1385 1205,1420 1115,1495 1060,1530 1005,1570 960,1605 910,1622 835,1612 775,1595 605,1565 550,1555 490,1565 420,1525 380,1500 340,1430 310,1375 275,1325 245,1295 210,1240 210,1215 175,1160 165,1150 147,1120";
const ring =
  "M658 55L705 60L732 92L848 115L958 138L1072 160L1145 160L1185 195L1235 260L1300 370L1380 510L1440 600L1478 660L1482 710L1475 790L1455 880L1440 960L1425 1060L1410 1130L1395 1200L1380 1260L1340 1320L1210 1430L1120 1520L1030 1600L950 1627L908 1636L835 1625L778 1638L605 1602L520 1585L470 1553L395 1520L350 1475L300 1410L240 1320L175 1205L130 1120L85 990L85 920L105 850L115 770L140 640L150 560L160 480L175 430L200 385L240 350L305 310L360 275L450 210L530 150L560 110L600 75Z";

const Model = () => (
  <svg viewBox="413 147 1293 831" className="block h-full w-full">
    <defs>
      <filter id="soft" x="-20%" y="-20%" width="140%" height="140%">
        <feGaussianBlur stdDeviation="42" />
      </filter>
    </defs>
    <g transform="translate(640 170) scale(.4592 .3333)">
      <polygon points={silhouette} transform="translate(-6 30)" fill="#000" opacity=".6" filter="url(#soft)" />
      <polygon points={silhouette} fill="#2a0c10" />
      <polygon points="1145,170 1240,280 1420,570 1480,660 1495,700 1495,1050 1440,1050 1190,630" fill="#1b0608" />
      <polygon points="70,1050 130,1140 370,1520 420,1540 450,2020 400,2005 360,1965 340,1930 100,1530 75,1470 70,1440" fill="#1d0709" />
      <polygon points="70,1050 150,1075 165,960 180,880 205,830 150,480 120,640 78,905" fill="#220a0d" />
      <polygon points={opening} fill="#fff" />
      <path
        d="M555 170V535M575 120V320M575 350V530M595 100V300M595 340V505M615 120V495M635 120V280M635 320V490M657 70V290M682 75V290M682 320V505M705 75V290M705 320V505M727 130V495M1075 195V575M1097 155V370M1097 400V580M1120 165V380M1120 410V585M1143 175V390M1143 420V595M1163 230V610M1180 190V622M1200 280V650M1220 300V685M188 400V830M207 400V810M225 430V790M247 400V775M265 390V765"
        fill="none"
        stroke="#050101"
        strokeWidth="1.5"
        vectorEffect="non-scaling-stroke"
      />
      <path d="M658 310V495" stroke="#9a9a9a" strokeWidth="1" vectorEffect="non-scaling-stroke" />
      <path d={ring} fill="none" stroke="#5e1f2a" strokeWidth="9" strokeLinejoin="round" vectorEffect="non-scaling-stroke" />
      {backRim.map((p) => (
        <polygon key={p} points={p} fill="#6a2430" stroke="#230b0f" strokeWidth=".6" vectorEffect="non-scaling-stroke" />
      ))}
      {darkRim.map((p) => (
        <polygon key={p} points={p} fill="#35101a" stroke="#1a0508" strokeWidth=".6" vectorEffect="non-scaling-stroke" />
      ))}
    </g>
    <g transform="translate(640 520) scale(.4592 .3333)">
      <path
        d="M108 300V480M122 100V510M350 470V850M368 470V870M388 530V700M388 740V910M413 540V710M413 740V930M440 550V970M465 510V730M465 760V970M487 570V950M835 630V1010M857 600V810M857 840V1050M882 640V820M882 840V1050M933 645V1010M962 600V800M962 840V1040M986 610V1000M1007 600V800M1028 590V960M1315 365V760M1335 540V745M1355 335V525M1375 290V700M1395 270V680"
        fill="none"
        stroke="#050101"
        strokeWidth="1.5"
        vectorEffect="non-scaling-stroke"
      />
      <path d="M908 600V1055" stroke="#6d6d6d" strokeWidth="1" vectorEffect="non-scaling-stroke" />
      <ellipse cx="195" cy="290" rx="18" ry="60" transform="rotate(-25 195 290)" fill="none" stroke="#0c0203" strokeWidth="1" vectorEffect="non-scaling-stroke" />
      <ellipse cx="250" cy="650" rx="18" ry="55" transform="rotate(-25 250 650)" fill="none" stroke="#0c0203" strokeWidth="1" vectorEffect="non-scaling-stroke" />
      <path d="M1482 190L1422 590" stroke="#f6e7a0" strokeWidth="1.6" strokeDasharray="6 5" vectorEffect="non-scaling-stroke" />
      {frontRim.map((p) => (
        <polygon key={p} points={p} fill="#6a2430" stroke="#230b0f" strokeWidth=".6" vectorEffect="non-scaling-stroke" />
      ))}
      {cream.map((p) => (
        <polygon key={p} points={p} fill="#fdeca6" />
      ))}
    </g>
    {/* triad */}
    <path d="M463 912v-16" stroke="#1f5f1f" strokeWidth="6" />
    <circle cx="463" cy="895" r="5" fill="#1c6a1c" />
    <path d="M465 908l22-12" stroke="#c02020" strokeWidth="4.5" />
    <path d="M485 890l12 2-10 7z" fill="#7a1818" />
    <path d="M463 911l14 16" stroke="#1d1db0" strokeWidth="5" />
    <path d="M472 928l9-6 1 12z" fill="#3a48d8" />
    <g fontFamily="Liberation Sans" fontSize="13">
      <text x="458" y="885" fill="#12a012">Y</text>
      <text x="493" y="893" fill="#e01010">X</text>
      <text x="480" y="943" fill="#1010e0">Z</text>
    </g>
  </svg>
);

const sideTabs: ReactNode[] = [
  <Ic key="a">
    <path d="M1 10l9-8 9 8" fill="none" stroke="#1d6a94" strokeWidth="2" />
    <path d="M4 9v10h12V9" fill="#fff" stroke="#333" />
    <rect x="8" y="12" width="4" height="7" fill="#ddd" stroke="#333" />
  </Ic>,
  <Library key="b" />,
  <Ic key="c">
    <path d="M1 4h7l2 3h7v4H6l-3 8H1z" fill="#eee" stroke="#444" />
    <path d="M1 19l4-9h14l-4 9z" fill="#f7f7f7" stroke="#444" />
  </Ic>,
  <Ic key="d">
    <rect x="1" y="2" width="18" height="16" fill="#fff" stroke="#333" />
    <path d="M3 4h9v3H9v2h3v3H3V9h3V7H3z" fill="#f0c020" stroke="#5b4700" />
    <path d="M14 5h3v3h-3zM14 11h3v3h-3z" fill="#999" stroke="#444" />
  </Ic>,
  <Ball key="e" s={21} />,
  <Ic key="f">
    <rect x="2" y="1" width="16" height="18" fill="#fff" stroke="#123f5c" strokeWidth="1.4" />
    <path d="M2 4h16" stroke="#2f86b8" strokeWidth="3" />
    <path d="M5 8h2M9 8h6M5 12h2M9 12h6M5 16h2M9 16h6" stroke="#2f86b8" strokeWidth="1.5" />
  </Ic>,
  <Ic key="g">
    <circle cx="10" cy="10" r="9" fill="#d8eef8" stroke="#567" />
    <path d="M3 9a7 7 0 0 1 12-4l2-1v6h-6l2-2a4 4 0 0 0-6 1zM17 11a7 7 0 0 1-12 4l-2 1v-6h6l-2 2a4 4 0 0 0 6-1z" fill="#1f76c0" />
  </Ic>,
  <Ic key="h">
    <path d="M1 3h12v8H6l-3 3v-3H1z" fill="#2f86b8" stroke="#123f5c" />
    <path d="M8 8h11v8h-2v3l-3-3H8z" fill="#fff" stroke="#333" />
  </Ic>,
  <Ic key="i">
    <path d="M2 6l8-4 8 4v9l-8 4-8-4z" fill="#c33" stroke="#611" />
    <circle cx="8" cy="10" r="5" fill="#e9e9e9" stroke="#a11" />
    <path d="M12 12l6 6" stroke="#2f86b8" strokeWidth="2.4" />
  </Ic>,
];

const libRows: [boolean, ReactNode, string][] = [
  [true, <Library key="a" s={21} />, "Design Library"],
  [
    false,
    <Ic key="b" s={21}>
      <path d="M3 2h14v4l-2 2h-3v11H8V8H5L3 6z" fill="#bbb" stroke="#444" />
      <path d="M8 11h4M8 14h4" stroke="#555" />
    </Ic>,
    "Toolbox",
  ],
  [
    true,
    <Ic key="c" s={21}>
      <circle cx="10" cy="10" r="9" fill="#9fc4dc" stroke="#456" />
      <path d="M4 7l4-3 2 3-3 3 3 3-2 4-2-4zM12 3l5 3-2 4-3-2zM13 12l3 1-3 3z" fill="#2a5f86" />
    </Ic>,
    "3D ContentCentral",
  ],
  [
    true,
    <svg key="d" viewBox="0 0 20 20" width={21} height={21} className="shrink-0">
      <path d="M1 5l9-4 9 4v11l-9 4-9-4z" fill="#b8242a" />
      <path d="M10 8v12M1 5l9 3 9-3" stroke="#7d1216" fill="none" />
      <text x="5.5" y="15" fontSize="7" fill="#fff" textAnchor="middle" fontWeight="700" fontFamily="Liberation Sans">S</text>
      <text x="14.5" y="15" fontSize="7" fill="#fff" textAnchor="middle" fontWeight="700" fontFamily="Liberation Sans">W</text>
    </svg>,
    "SOLIDWORKS Content",
  ],
];

const TaskPane = () => (
  <div className="relative z-10 flex w-[213px] shrink-0 flex-col border-l border-[#8c8c8c] bg-[#f5f5f5]">
    <div className="flex h-[24px] shrink-0 items-center border-b-2 border-t border-b-[#1e1e1e] border-t-[#8c8c8c] bg-gradient-to-b from-[#b4b7bb] to-[#a3a6aa]">
      <ChevronsLeft size={13} strokeWidth={2.2} color="#111" className="mb-[5px] ml-[6px]" />
      <div className="flex-1 text-center text-[14.5px] font-bold text-[#111]">Design Library</div>
      <Pin size={17} fill="#222" stroke="#222" className="mr-[5px] rotate-45" />
    </div>
    <div className="flex h-[33px] shrink-0 items-center border-b-2 border-[#c8c8c8] bg-white">
      <div className="w-[5px] shrink-0" />
      <Box w={20}>
        <div className="flex h-[16px] w-[16px] items-center justify-center rounded-full border border-[#ccc] bg-[#f2f2f2]">
          <ChevronLeft size={11} color="#bbb" strokeWidth={3} />
        </div>
      </Box>
      <div className="w-[7px] shrink-0" />
      <Box w={20}>
        <div className="flex h-[16px] w-[16px] items-center justify-center rounded-full border border-[#ccc] bg-[#f2f2f2]">
          <ChevronRight size={11} color="#bbb" strokeWidth={3} />
        </div>
      </Box>
      <Box w={20}><Caret c="#777" /></Box>
      <Box w={24}>
        <Ic>
          <path d="M2 5l4-3 8-1v13l-3 3H5l-3-2z" fill="#f4f4f4" stroke="#444" />
          <path d="M6 4v12M10 3v13" stroke="#444" />
          <path d="M15 9v9M11 14h9" stroke="#2f8a0a" strokeWidth="3" />
        </Ic>
      </Box>
      <Box w={36}>
        <Ic>
          <path d="M5 6l4-3 8-1v13l-3 3H8l-3-2z" fill="#f4f4f4" stroke="#444" />
          <path d="M9 5v12M13 4v13" stroke="#444" />
          <path d="M4 1l.8 2 2-.8-.8 2 2 .8-2 .8.8 2-2-.8L4 9l-.8-2-2 .8.8-2-2-.8 2-.8-.8-2 2 .8z" fill="#e07b18" />
        </Ic>
      </Box>
      <Box w={14}>
        <Ic>
          <path d="M2 8h5l1 2h7v8H2z" fill="#f4f2e6" stroke="#c8c8c8" />
          <path d="M2 18l3-6h13l-3 6z" fill="#faf8ee" stroke="#c8c8c8" />
          <path d="M5 2l.6 2 2-.6-.6 2 2 .6-2 .6.6 2-2-.6L5 10" stroke="#ccc" fill="none" />
        </Ic>
      </Box>
      <Box w={40}>
        <Ic>
          <path d="M3 9a7 7 0 0 1 12-4l2-2v7h-7l2-2a4 4 0 0 0-6 1zM17 11a7 7 0 0 1-12 4l-2 2v-7h7l-2 2a4 4 0 0 0 6-1z" fill="#2a86b8" stroke="#144a68" strokeWidth=".6" />
        </Ic>
      </Box>
      <Box w={12}>
        <Ic s={16}>
          <path d="M10 2l6 7h-4v9H8V9H4z" fill="#eee" stroke="#ccc" />
        </Ic>
      </Box>
    </div>
    <div className="flex h-[192px] shrink-0 flex-col bg-[#f7f7f7] pt-[8px] text-[14.2px] text-[#111]">
      {libRows.map(([exp, ic, l]) => (
        <div key={l} className="flex h-[24px] shrink-0 items-center whitespace-nowrap pl-[7px]">
          <div className="flex w-[13px] shrink-0 items-center">
            {exp ? <ChevronRight size={14} strokeWidth={1.6} color="#777" /> : null}
          </div>
          <div className="ml-[4px] flex w-[21px] shrink-0 items-center">{ic}</div>
          <span className="ml-[6px]">{l}</span>
        </div>
      ))}
    </div>
    <div className="flex h-[22px] shrink-0 items-center border-t border-white bg-[#f0f0f0] pl-[21px]">
      <div className="h-[3px] w-[165px] rounded bg-[#8a8a8a]" />
    </div>
    <div className="ml-[1px] h-[5px] shrink-0 border-y border-b-[#6a7389] border-t-[#b8bccb] bg-[#9ea5ba]" />
    <div className="flex-1" />
    <div className="absolute right-full top-[57px] flex w-[34px] flex-col border border-[#8c8c8c]">
      {sideTabs.map((t, i) => (
        <div key={i} className={i === 1 ? "flex h-[30px] items-center justify-center border-b border-[#8c8c8c] bg-white" : "flex h-[30px] items-center justify-center border-b border-[#8c8c8c] bg-[#d9d9d9]"}>
          {t}
        </div>
      ))}
    </div>
  </div>
);

const BottomTabs = () => (
  <div className="flex h-[21px] shrink-0 border-y border-[#8c8c8c] bg-[#f5f5f5] text-[14.2px] text-[#111]">
    <div className="w-[2px] bg-[#a9c7d4]" />
    <div className="ml-[25px] flex w-[80px] border-t border-[#222]">
      {["M8 3v12M15 3L9 9l6 6z", "M13 3L6 9l7 6z", "M7 3l7 6-7 6z", "M5 3l6 6-6 6zM13 3v12"].map((d) => (
        <div key={d} className="flex w-[20px] items-center justify-center border border-[#8a8da6] bg-[#a4a7bd]">
          <svg viewBox="0 0 18 18" width={14} height={14}>
            <path d={d} fill="#777b90" stroke="#777b90" />
          </svg>
        </div>
      ))}
    </div>
    <div className="flex w-[76px] items-center justify-center border-r border-[#8c8c8c] bg-white font-bold">Model</div>
    <div className="flex w-[89px] items-center justify-center border-r border-[#8c8c8c] bg-[#d2d2d2]">3D Views</div>
    <div className="flex w-[144px] items-center justify-center border-r border-[#8c8c8c] bg-[#d2d2d2]">Motion Study 1</div>
  </div>
);

const StatusBar = () => (
  <div className="flex h-[20px] shrink-0 border-t border-[#8c8c8c] bg-[#f5f5f5] pl-[1px] pt-[2px] text-[14.2px] leading-[20px] text-[#111]">
    <div className="whitespace-nowrap">SOLIDWORKS Premium 2017 x64 Edition</div>
    <div className="ml-auto flex shrink-0 whitespace-nowrap">
      <div className="w-[104px]">Under Defined</div>
      <div className="w-[7px] border-l border-[#d4d4d4]" />
      <div className="w-[124px] border-l border-[#d4d4d4] pl-[4px]">Editing Assembly</div>
      <div className="w-[16px] border-l border-[#d4d4d4]" />
      <div className="w-[111px] border-l border-[#d4d4d4] pl-[50px]">IPS</div>
      <div className="flex w-[88px] items-start">
        <svg viewBox="0 0 8 4" width={8} height={4} className="mt-[7px] shrink-0">
          <path d="M4 0l4 4H0z" fill="#555" />
        </svg>
        <div className="ml-[62px]">
          <Part s={17} line="#666" />
        </div>
      </div>
    </div>
  </div>
);

export default function App() {
  return (
    <div className="flex h-[1018px] w-[1919px] flex-col overflow-hidden bg-[#f5f5f5] font-['Noto_Sans',sans-serif]">
      <TitleBar />
      <Ribbon />
      <div className="flex min-h-0 flex-1">
        <div className="flex min-w-0 flex-1 flex-col">
          <TabRow />
          <div className="flex min-h-0 flex-1">
            <LeftPanel />
            <div className="min-w-0 flex-1 bg-white">
              <Model />
            </div>
          </div>
          <BottomTabs />
        </div>
        <TaskPane />
      </div>
      <StatusBar />
    </div>
  );
}
